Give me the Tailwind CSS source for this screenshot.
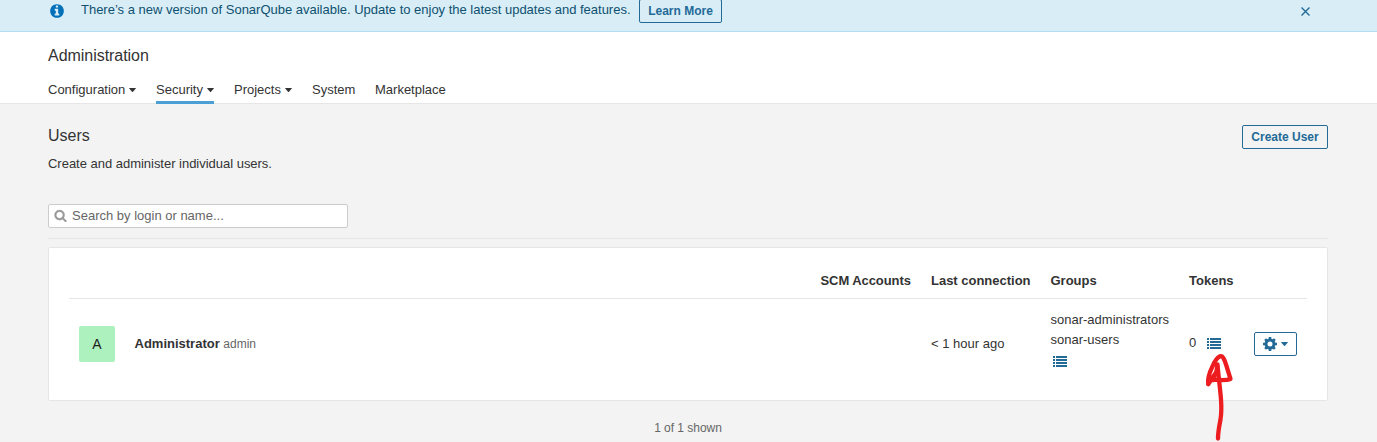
<!DOCTYPE html>
<html lang="en">
<head>
<meta charset="utf-8">
<title>Users - Administration</title>
<script src="https://cdn.jsdelivr.net/npm/@tailwindcss/browser@4"></script>
</head>
<body class="relative h-[442px] overflow-hidden bg-[#f3f3f3] font-['Liberation_Sans',Arial,sans-serif] text-[13px] leading-5 text-[#333]">
<svg class="hidden">
  <symbol id="list" viewBox="0 0 14 11"><path d="M0 0h2v2H0zM3 0h11v2H3zM0 3h2v2H0zM3 3h11v2H3zM0 6h2v2H0zM3 6h11v2H3zM0 9h2v2H0zM3 9h11v2H3z" fill="#236a97" shape-rendering="crispEdges"/></symbol>
  <symbol id="caret" viewBox="0 0 7 4"><path d="M.5 0h6q.6 0 .3.6L4 3.7q-.5.5-1 0L.2.6Q-.1 0 .5 0z" fill="currentColor"/></symbol>
</svg>

<div class="flex h-8 items-start border-b border-[#b1dff3] bg-[#d9edf7] pl-[49px] text-[#0e516f]">
  <svg class="mt-[3px] size-4 shrink-0" viewBox="0 0 1792 1792" fill="#0271b9"><path d="M1152 1376v-160q0-14-9-23t-23-9h-96v-512q0-14-9-23t-23-9h-320q-14 0-23 9t-9 23v160q0 14 9 23t23 9h96v320h-96q-14 0-23 9t-9 23v160q0 14 9 23t23 9h448q14 0 23-9t9-23zm-128-896v-160q0-14-9-23t-23-9h-192q-14 0-23 9t-9 23v160q0 14 9 23t23 9h192q14 0 23-9t9-23zm640 416q0 209-103 385.5t-279.5 279.5-385.5 103-385.5-103-279.5-279.5-103-385.5 103-385.5 279.5-279.5 385.5-103 385.5 103 279.5 279.5 103 385.5z"/></svg>
  <span class="ml-4 w-[558px] whitespace-nowrap tracking-[-0.01px]">There’s a new version of SonarQube available. Update to enjoy the latest updates and features.</span>
  <button class="-mt-px h-6 w-[83px] rounded-[2px] border border-[#236a97] text-xs leading-[22px] font-bold whitespace-nowrap text-[#236a97]">Learn More</button>
  <svg class="mt-[7px] mr-[67.5px] ml-auto size-[9px]" viewBox="0 0 9 9" stroke="#236a97" stroke-width="1.4"><path d="M.5.5l8 8M8.500.5l-8 8"/></svg>
</div>

<header class="h-[72px] border-b border-[#e6e6e6] bg-white px-12 pt-[14px]">
  <h1 class="text-base leading-5 tracking-[-0.04px]">Administration</h1>
  <nav class="mt-[14px] flex h-[24px] gap-5 whitespace-nowrap">
    <a class="flex w-[88px] items-start justify-between">Configuration<svg class="mt-[8px] h-1 w-[7px]"><use href="#caret"/></svg></a>
    <a class="flex w-[58px] items-start justify-between border-b-[3px] border-[#4b9fd5]">Security<svg class="mt-[8px] h-1 w-[7px]"><use href="#caret"/></svg></a>
    <a class="flex w-[58px] items-start justify-between">Projects<svg class="mt-[8px] h-1 w-[7px]"><use href="#caret"/></svg></a>
    <a class="w-[43px]">System</a>
    <a>Marketplace</a>
  </nav>
</header>

<main class="px-12 pr-[49px] pt-[21px]">
  <div class="flex items-start justify-between">
    <div class="pt-px">
      <h2 class="text-base leading-5">Users</h2>
      <p class="mt-2 tracking-[-0.02px]">Create and administer individual users.</p>
    </div>
    <button class="h-6 w-[86px] rounded-[2px] border border-[#236a97] text-xs leading-[22px] font-bold whitespace-nowrap text-[#236a97]">Create User</button>
  </div>

  <div class="mt-[30px] flex h-6 w-[300px] items-center rounded-[2px] border border-[#ccc] bg-white pl-[5px] text-[#666]">
    <svg class="-mt-px size-[13px]" viewBox="0 0 1792 1792" fill="#999" stroke="#999" stroke-width="30"><path d="M1216 832q0-185-131.5-316.5t-316.5-131.500-316.500 131.500-131.500 316.500 131.500 316.500 316.500 131.500 316.500-131.500 131.500-316.500zm512 832q0 52-38 90t-90 38q-54 0-90-38l-343-342q-179 124-399 124-143 0-273.500-55.500t-225-150-150-225-55.500-273.500 55.500-273.500 150-225 225-150 273.500-55.500 273.500 55.500 225 150 150 225 55.500 273.500q0 220-124 399l343 343q37 37 37 90z"/></svg>
    <span class="ml-[5px]">Search by login or name...</span>
  </div>

  <div class="mt-[10px] h-px bg-[#e6e6e6]"></div>

  <section class="mt-2 h-[154px] rounded-[2px] border border-[#e6e6e6] bg-white px-5 pt-[23px]">
    <div class="grid h-[28px] grid-cols-[751.5px_110.5px_119.5px_138.5px_65px_1fr] border-b border-[#e6e6e6] font-bold whitespace-nowrap">
      <span></span><span class="tracking-[-0.08px]">SCM Accounts</span><span class="tracking-[-0.01px]">Last connection</span><span>Groups</span><span>Tokens</span><span></span>
    </div>
    <div class="grid h-[90px] grid-cols-[862px_119.500px_138.500px_65px_1fr] items-center whitespace-nowrap">
      <div class="flex items-center pl-[10px]">
        <span class="flex size-9 items-center justify-center rounded-[2px] bg-[#adf1be] text-[14px] text-[#222]">A</span>
        <span class="ml-[19.500px]"><b>Administrator</b> <span class="text-xs text-[#666]">admin</span></span>
      </div>
      <span>&lt; 1 hour ago</span>
      <div class="pb-[11px]">
        <div>sonar-administrators</div>
        <div>sonar-users</div>
        <svg class="mt-[6px] ml-[2.5px] h-[11px] w-[14px]"><use href="#list"/></svg>
      </div>
      <div class="flex items-center"><span class="-mt-0.5 w-[18px]">0</span><svg class="-mt-[2px] h-[11px] w-[14px]"><use href="#list"/></svg></div>
      <button class="flex h-6 w-[43px] items-center rounded-[2px] border border-[#236a97] pl-[7px] text-[#236a97]">
        <svg class="size-4" viewBox="-8 -8 16 16" fill="none" stroke="currentColor">
          <circle r="4" stroke-width="3"/>
          <path d="M0-7v2.500M0 7v-2.500M-7 0h2.500M7 0h-2.500M-4.900-4.900l1.600 1.600M4.900 4.900l-1.600-1.600M-4.900 4.900l1.600-1.600M4.900-4.900l-1.600 1.600" stroke-width="2.600"/>
        </svg>
        <svg class="ml-[3px] h-1 w-[7px]"><use href="#caret"/></svg>
      </button>
    </div>
  </section>

  <p class="mt-[17px] text-center text-xs leading-5 text-[#666]"><span class="tracking-[-0.03px]">1 of 1 shown</span></p>
</main>

<svg class="absolute top-[350px] left-[1200px] h-[92px] w-[40px]" viewBox="1200 350 40 92" fill="none" stroke="#ec1c1f" stroke-width="4.300" stroke-linecap="round" stroke-linejoin="round">
  <path d="M1217.500 364.500c.5 8 2.500 22 3.500 35 .5 7 0 17-.5 20-1 5-2.500 13-2.500 19"/>
  <path d="M1217.300 366l-1 6-8.100 12.300c-.5-5 .8-10.800 3.800-16.800 2-5 5-10 8-11.200 3-1 4.800 4 6.300 9l4.200 13.700c-5 2-12 .5-18 1l4.500-9"/>
</svg>
</body>
</html>
